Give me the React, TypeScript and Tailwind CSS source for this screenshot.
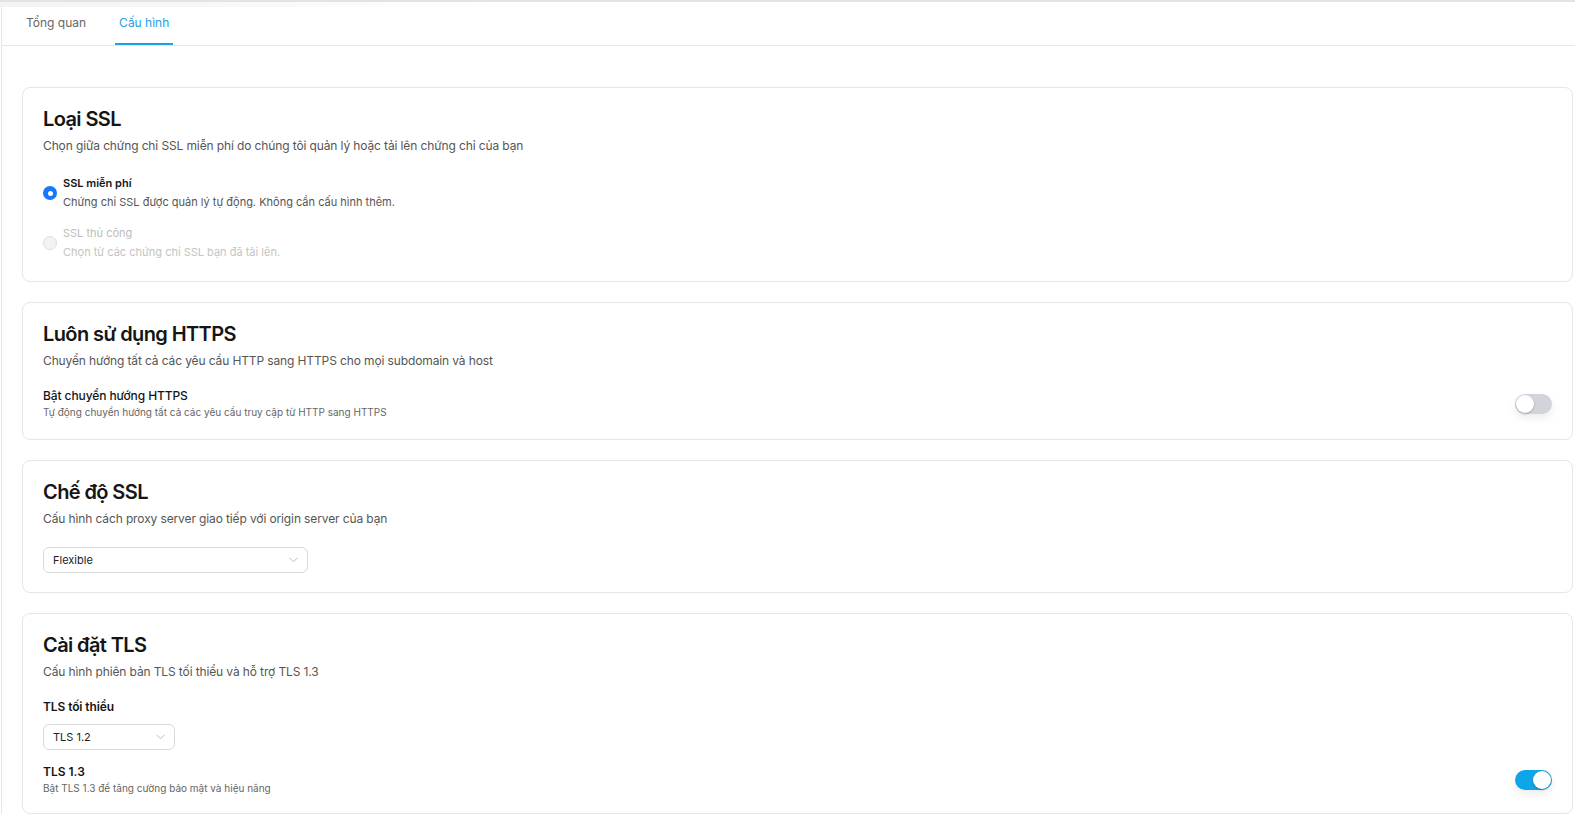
import { useState } from "react";

function Chevron() {
  return (
    <svg width="9" height="6" viewBox="0 0 9 6" fill="none" className="shrink-0">
      <path d="M0.5 0.75L4.5 4.75L8.5 0.75" stroke="#bdbdbd" strokeWidth="1" />
    </svg>
  );
}

function Toggle({ on }: { on: boolean }) {
  return (
    <div
      className={
        on
          ? "flex h-5 w-[37px] shrink-0 items-center justify-end rounded-full bg-[#0ea5e9] p-px shadow-[0_4px_8px_rgba(0,0,0,0.08)]"
          : "flex h-5 w-[37px] shrink-0 items-center justify-start rounded-full bg-[#d1d4da] p-px shadow-[0_4px_8px_rgba(0,0,0,0.08)]"
      }
    >
      <div className="h-[18px] w-[18px] rounded-full bg-white shadow-[0_1px_2px_rgba(0,0,0,0.25)]" />
    </div>
  );
}

function Card({
  title,
  subtitle,
  pb = "pb-[19px]",
  children,
}: {
  title: string;
  subtitle: string;
  pb?: string;
  children: React.ReactNode;
}) {
  return (
    <div className={`rounded-lg border border-[#e6e6e6] bg-white px-5 pt-[17px] ${pb}`}>
      <h2 className="text-[20px] font-semibold leading-7 tracking-[-0.6px] text-[#151515]">{title}</h2>
      <p className="mt-[3px] text-[12px] leading-5 tracking-[-0.12px] text-[#555]">{subtitle}</p>
      {children}
    </div>
  );
}

function Select({ value, width }: { value: string; width: string }) {
  return (
    <div className={`flex h-[26px] items-center justify-between rounded-md border border-[#d9d9d9] bg-white pr-[9px] pl-[9px] ${width}`}>
      <span className="text-[11px] text-[#222]">{value}</span>
      <Chevron />
    </div>
  );
}

export default function App() {
  const [tab] = useState("config");

  return (
    <div className="relative min-h-screen bg-white font-['Inter','Noto_Sans',sans-serif]">
      {/* top edge */}
      <div className="h-[2px] bg-[#e3e3e3]" />
      <div className="pointer-events-none absolute top-[2px] left-0 h-[5px] w-[520px] bg-gradient-to-r from-[#f3f3f3] to-transparent" />

      <div className="ml-px border-l border-[#e6e6e6]">
        {/* Tabs */}
        <div className="flex h-[44px] gap-[25px] border-b border-[#e8e8e8] pl-5">
          <div
            className={
              tab === "overview"
                ? "flex items-center border-b-2 border-[#1ea0e6] px-1 text-[12px] text-[#1ea0e6]"
                : "flex items-center border-b-2 border-transparent px-1 text-[12px] text-[#666]"
            }
          >
            Tổng quan
          </div>
          <div
            className={
              tab === "config"
                ? "flex items-center border-b-2 border-[#1ea0e6] px-1 text-[12px] text-[#1ea0e6]"
                : "flex items-center border-b-2 border-transparent px-1 text-[12px] text-[#666]"
            }
          >
            Cấu hình
          </div>
        </div>

        {/* Content */}
        <div className="flex flex-col gap-5 pt-[41px] pr-[2px] pl-5">
          <Card title="Loại SSL" subtitle="Chọn giữa chứng chỉ SSL miễn phí do chúng tôi quản lý hoặc tải lên chứng chỉ của bạn">
            <div className="mt-[18px] flex flex-col gap-3">
              <div className="flex items-center gap-[6px]">
                <div className="flex h-[14px] w-[14px] items-center justify-center rounded-full bg-[#1677ff]">
                  <div className="h-[5px] w-[5px] rounded-full bg-white" />
                </div>
                <div>
                  <div className="text-[11px] font-semibold leading-[19px] text-[#151515]">SSL miễn phí</div>
                  <div className="text-[11px] leading-[19px] text-[#555]">Chứng chỉ SSL được quản lý tự động. Không cần cấu hình thêm.</div>
                </div>
              </div>
              <div className="flex items-center gap-[6px]">
                <div className="h-[14px] w-[14px] rounded-full border border-[#dedede] bg-[#f3f3f3]" />
                <div>
                  <div className="text-[11px] leading-[19px] text-[#bdbdbd]">SSL thủ công</div>
                  <div className="text-[11px] leading-[19px] text-[#c4c4c4]">Chọn từ các chứng chỉ SSL bạn đã tải lên.</div>
                </div>
              </div>
            </div>
          </Card>

          <Card title="Luôn sử dụng HTTPS" subtitle="Chuyển hướng tất cả các yêu cầu HTTP sang HTTPS cho mọi subdomain và host">
            <div className="mt-4 flex items-center justify-between">
              <div>
                <div className="text-[12px] font-medium leading-[18px] tracking-[-0.1px] text-[#151515]">Bật chuyển hướng HTTPS</div>
                <div className="text-[10px] leading-[15px] text-[#666]">Tự động chuyển hướng tất cả các yêu cầu truy cập từ HTTP sang HTTPS</div>
              </div>
              <Toggle on={false} />
            </div>
          </Card>

          <Card title="Chế độ SSL" subtitle="Cấu hình cách proxy server giao tiếp với origin server của bạn">
            <div className="mt-[18px]">
              <Select value="Flexible" width="w-[265px]" />
            </div>
          </Card>

          <Card title="Cài đặt TLS" subtitle="Cấu hình phiên bản TLS tối thiểu và hỗ trợ TLS 1.3" pb="pb-[17px]">
            <div className="mt-4 text-[12px] font-semibold leading-[18px] tracking-[-0.1px] text-[#151515]">TLS tối thiểu</div>
            <div className="mt-2">
              <Select value="TLS 1.2" width="w-[132px]" />
            </div>
            <div className="mt-[13px] flex items-center justify-between">
              <div>
                <div className="text-[12px] font-semibold leading-[18px] text-[#151515]">TLS 1.3</div>
                <div className="text-[10px] leading-[15px] text-[#666]">Bật TLS 1.3 để tăng cường bảo mật và hiệu năng</div>
              </div>
              <Toggle on />
            </div>
          </Card>
        </div>
      </div>
    </div>
  );
}
